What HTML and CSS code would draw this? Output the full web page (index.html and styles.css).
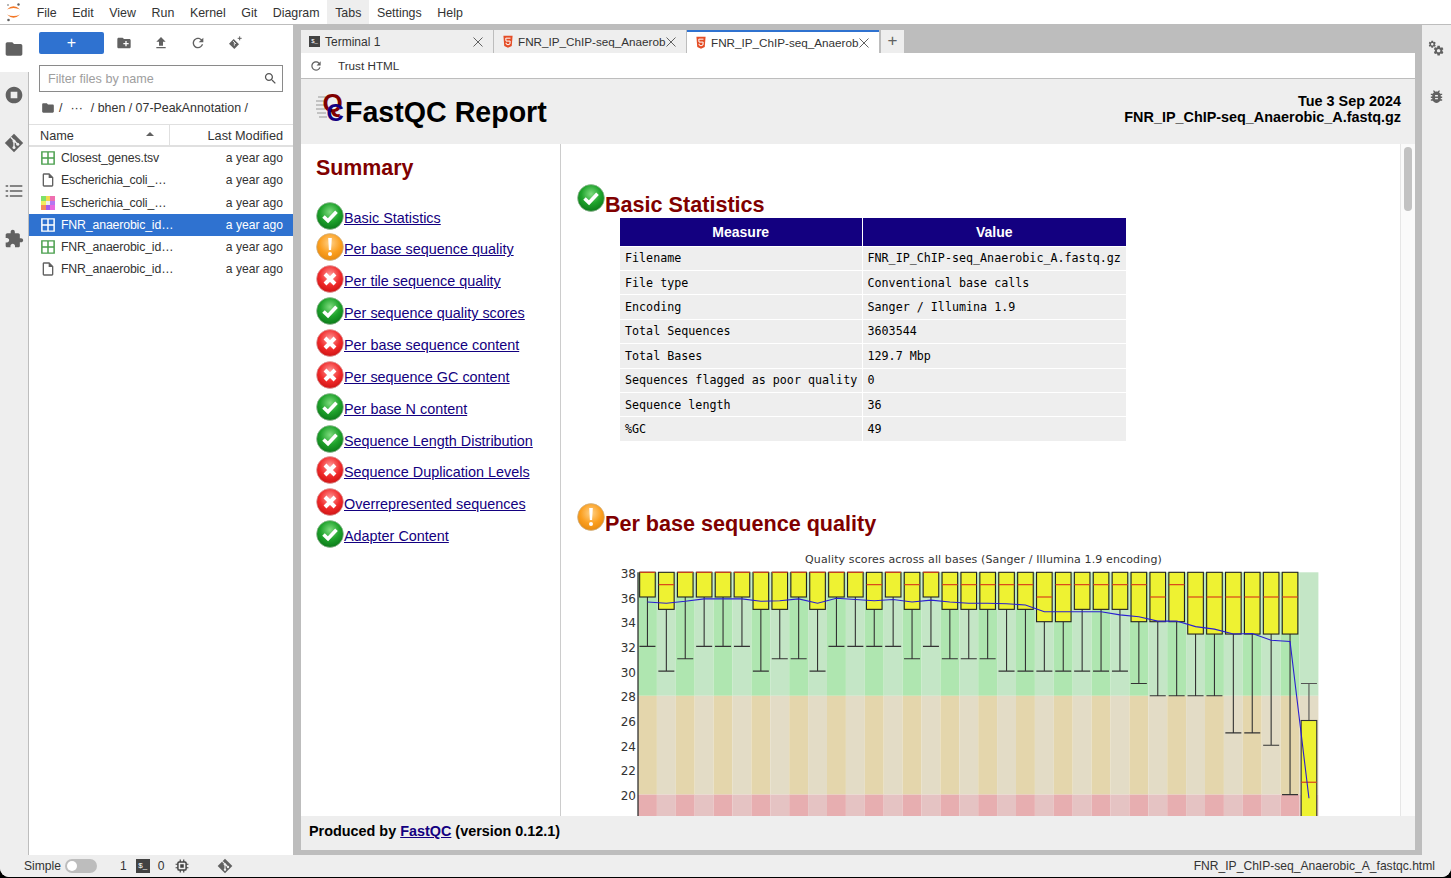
FILE: index.html
```html
<!DOCTYPE html>
<html lang="en">
<head>
    <meta charset="UTF-8">
    <title>FNR_IP_ChIP-seq_Anaerobic_A_fastqc.html - JupyterLab</title>
    <link rel="stylesheet" href="styles.css">
</head>
<body>
    <!-- Shared icons -->
    <svg class="icon-defs" aria-hidden="true">
        <defs>
            <radialGradient id="okFill" cx="50%" cy="35%" r="65%">
                <stop offset="0" stop-color="#7fdc7f"/><stop offset=".55" stop-color="#1fa32c"/><stop offset="1" stop-color="#0c7a1a"/>
            </radialGradient>
            <radialGradient id="warnFill" cx="50%" cy="35%" r="65%">
                <stop offset="0" stop-color="#ffd28a"/><stop offset=".6" stop-color="#fb9f1f"/><stop offset="1" stop-color="#e88a0f"/>
            </radialGradient>
            <radialGradient id="failFill" cx="50%" cy="35%" r="65%">
                <stop offset="0" stop-color="#ff9a9a"/><stop offset=".6" stop-color="#f02a2a"/><stop offset="1" stop-color="#cf1414"/>
            </radialGradient>
            <symbol id="status-ok" viewBox="0 0 28 28">
                <circle cx="14" cy="14" r="13.400" fill="url(#okFill)" stroke="#9cb89c" stroke-width=".7"/>
                <path d="M7.500 14.500l4.500 4.200 8.500-9" fill="none" stroke="#fff" stroke-width="3.600"/>
            </symbol>
            <symbol id="status-warn" viewBox="0 0 28 28">
                <circle cx="14" cy="14" r="13.400" fill="url(#warnFill)" stroke="#c9b28c" stroke-width=".7"/>
                <path d="M12.200 5h3.600l-.7 12h-2.200z" fill="#fff"/>
                <circle cx="14" cy="21" r="2" fill="#fff"/>
            </symbol>
            <symbol id="status-fail" viewBox="0 0 28 28">
                <circle cx="14" cy="14" r="13.400" fill="url(#failFill)" stroke="#d8a8a8" stroke-width=".7"/>
                <path d="M9 9l10 10M19 9L9 19" fill="none" stroke="#fff" stroke-width="4"/>
            </symbol>
            <symbol id="i-folder" viewBox="0 0 24 24"><path d="M10 4H4c-1.100 0-1.990.9-1.990 2L2 18c0 1.100.9 2 2 2h16c1.100 0 2-.9 2-2V8c0-1.100-.9-2-2-2h-8l-2-2z"/></symbol>
            <symbol id="i-refresh" viewBox="0 0 24 24"><path d="M17.650 6.350C16.200 4.900 14.210 4 12 4c-4.420 0-7.990 3.580-7.990 8s3.570 8 7.990 8c3.730 0 6.840-2.550 7.730-6h-2.080c-.82 2.330-3.040 4-5.650 4-3.310 0-6-2.690-6-6s2.690-6 6-6c1.660 0 3.140.69 4.220 1.780L13 11h7V4l-2.350 2.350z"/></symbol>
            <symbol id="i-git" viewBox="0 0 24 24">
                <path d="M12 1l11 11-11 11L1 12z"/>
                <path d="M8 5l8.500 8.500M12 9.500v8" fill="none" stroke="#eee" stroke-width="1.600"/>
                <circle cx="12" cy="9.500" r="1.800" fill="#eee"/><circle cx="12" cy="17.500" r="1.800" fill="#eee"/><circle cx="16.500" cy="13.500" r="1.800" fill="#eee"/>
            </symbol>
            <symbol id="i-table" viewBox="0 0 16 16">
                <path d="M1 1h14v14H1zM8 1v14M1 8h14" fill="none" stroke="currentColor" stroke-width="1.700"/>
            </symbol>
            <symbol id="i-file" viewBox="0 0 24 24"><path d="M14 2H6c-1.100 0-2 .9-2 2v16c0 1.100.9 2 2 2h12c1.100 0 2-.9 2-2V8l-6-6zM6 20V4h7v5h5v11H6z"/></symbol>
            <symbol id="i-html" viewBox="1 0 12 16">
                <path d="M1.500 1l1 12.500L7 15.500l4.500-2 1-12.500z" fill="#e44d26"/>
                <path d="M10 4H4.300l.3 3.500h5l-.3 3.500L7 12l-2.200-1-.1-1.500" fill="none" stroke="#fff" stroke-width="1.200"/>
            </symbol>
            <symbol id="i-close" viewBox="0 0 12 12"><path d="M1.500 1.500l9 9M10.500 1.500l-9 9" fill="none" stroke="#616161" stroke-width="1"/></symbol>
            <symbol id="i-gear" viewBox="0 0 24 24"><path d="M19.430 12.980c.04-.32.07-.64.07-.98s-.03-.66-.07-.98l2.110-1.650c.19-.15.24-.42.12-.64l-2-3.460c-.12-.22-.39-.3-.61-.22l-2.490 1c-.52-.4-1.080-.73-1.690-.98l-.38-2.650C14.460 2.180 14.250 2 14 2h-4c-.25 0-.46.18-.49.42l-.38 2.650c-.61.25-1.170.59-1.690.98l-2.490-1c-.23-.09-.49 0-.61.22l-2 3.460c-.13.22-.07.49.12.64l2.110 1.650c-.04.32-.07.65-.07.98s.03.66.07.98l-2.110 1.650c-.19.15-.24.42-.12.64l2 3.460c.12.22.39.3.61.22l2.490-1c.52.4 1.080.73 1.690.98l.38 2.650c.03.24.24.42.49.42h4c.25 0 .46-.18.49-.42l.38-2.650c.61-.25 1.170-.59 1.690-.98l2.490 1c.23.09.49 0 .61-.22l2-3.460c.12-.22.07-.49-.12-.64l-2.110-1.650zM12 15.500c-1.930 0-3.500-1.570-3.500-3.500s1.570-3.500 3.500-3.500 3.500 1.570 3.500 3.500-1.570 3.500-3.500 3.500z"/></symbol>
        </defs>
    </svg>

    <div class="app">
        <!-- Menu bar -->
        <header class="menubar">
            <svg class="jupyter-logo" viewBox="0 0 16 20">
                <path d="M2 7.500Q8.500 1 15 7.500 8.500 4.500 2 7.500zM2 12.500Q8.500 19 15 12.500 8.500 15.500 2 12.500z" fill="#f37726"/>
                <circle cx="13.500" cy="2.500" r="1.200" fill="#616161"/><circle cx="3" cy="3" r=".8" fill="#616161"/><circle cx="3.500" cy="18" r="1.300" fill="#616161"/>
            </svg>
            <nav class="menu">
                <span class="menu-item">File</span>
                <span class="menu-item">Edit</span>
                <span class="menu-item">View</span>
                <span class="menu-item">Run</span>
                <span class="menu-item">Kernel</span>
                <span class="menu-item">Git</span>
                <span class="menu-item">Diagram</span>
                <span class="menu-item active">Tabs</span>
                <span class="menu-item">Settings</span>
                <span class="menu-item">Help</span>
            </nav>
        </header>

        <div class="workspace">
            <!-- Left icon strip -->
            <aside class="side-tabs">
                <div class="side-tab active"><svg class="side-icon"><use href="#i-folder"/></svg></div>
                <div class="side-tab">
                    <svg class="side-icon" viewBox="0 0 24 24"><path d="M12 2C6.480 2 2 6.480 2 12s4.480 10 10 10 10-4.480 10-10S17.520 2 12 2zm4 14H8V8h8v8z"/></svg>
                </div>
                <div class="side-tab"><svg class="side-icon"><use href="#i-git"/></svg></div>
                <div class="side-tab">
                    <svg class="side-icon" viewBox="0 0 24 24"><path d="M7 5h15v2H7zM7 11h15v2H7zM7 17h15v2H7zM2 5h3v2H2zM2 11h3v2H2zM2 17h3v2H2z"/></svg>
                </div>
                <div class="side-tab">
                    <svg class="side-icon" viewBox="0 0 24 24"><path d="M20.500 11H19V7c0-1.100-.9-2-2-2h-4V3.500C13 2.120 11.880 1 10.500 1S8 2.120 8 3.500V5H4c-1.100 0-1.990.9-1.990 2v3.800H3.500c1.490 0 2.700 1.210 2.700 2.700s-1.210 2.700-2.700 2.700H2V20c0 1.100.9 2 2 2h3.800v-1.500c0-1.490 1.210-2.700 2.700-2.700 1.490 0 2.700 1.210 2.700 2.700V22H17c1.100 0 2-.9 2-2v-4h1.500c1.380 0 2.500-1.120 2.500-2.500S21.880 11 20.500 11z"/></svg>
                </div>
            </aside>

            <!-- File browser -->
            <section class="file-panel">
                <div class="file-toolbar">
                    <button class="new-btn">+</button>
                    <svg class="tool-icon" viewBox="0 0 24 24"><path d="M20 6h-8l-2-2H4c-1.110 0-1.990.89-1.990 2L2 18c0 1.110.89 2 2 2h16c1.110 0 2-.89 2-2V8c0-1.110-.89-2-2-2zm-1 8h-3v3h-2v-3h-3v-2h3V9h2v3h3v2z"/></svg>
                    <svg class="tool-icon" viewBox="0 0 24 24"><path d="M9 16h6v-6h4l-7-7-7 7h4v6zm-4 2h14v2H5z"/></svg>
                    <svg class="tool-icon"><use href="#i-refresh"/></svg>
                    <svg class="tool-icon" viewBox="0 0 24 24">
                        <path d="M10 6l8 8-7 7-8-8z"/><path d="M9 9l4.500 4.500M11 11v5" fill="none" stroke="#fff" stroke-width="1.200"/>
                        <path d="M19 2v6M16 5h6" fill="none" stroke="#616161" stroke-width="1.500"/>
                    </svg>
                </div>
                <div class="file-filter">
                    <span>Filter files by name</span>
                    <svg class="search-icon" viewBox="0 0 24 24"><path d="M15.500 14h-.79l-.28-.27C15.410 12.590 16 11.110 16 9.500 16 5.910 13.090 3 9.500 3S3 5.910 3 9.500 5.910 16 9.500 16c1.610 0 3.090-.59 4.230-1.570l.27.28v.79l5 4.990L20.490 19l-4.990-5zm-6 0C7.010 14 5 11.990 5 9.500S7.010 5 9.500 5 14 7.010 14 9.500 11.990 14 9.500 14z"/></svg>
                </div>
                <div class="crumbs">
                    <svg class="crumb-icon"><use href="#i-folder"/></svg>
                    <span>/</span><span class="crumb-dots">···</span><span>/ bhen / 07-PeakAnnotation /</span>
                </div>
                <div class="file-head">
                    <div class="col-name">Name<span class="sort-caret"></span></div>
                    <div class="col-modified">Last Modified</div>
                </div>
                <ul class="file-list">
                    <li class="file-row"><svg class="file-icon green"><use href="#i-table"/></svg><span class="file-name">Closest_genes.tsv</span><span class="file-date">a year ago</span></li>
                    <li class="file-row"><svg class="file-icon doc"><use href="#i-file"/></svg><span class="file-name">Escherichia_coli_…</span><span class="file-date">a year ago</span></li>
                    <li class="file-row">
                        <svg class="file-icon" viewBox="0 0 14 14">
                            <rect width="5" height="5" fill="#7ee06a"/><rect x="5" width="4" height="5" fill="#f3d84c"/><rect x="9" width="5" height="5" fill="#ef6fb0"/>
                            <rect y="5" width="5" height="4" fill="#f2ee5e"/><rect x="5" y="5" width="4" height="4" fill="#eee"/><rect x="9" y="5" width="5" height="4" fill="#b478f0"/>
                            <rect y="9" width="5" height="5" fill="#f58a5a"/><rect x="5" y="9" width="4" height="5" fill="#a45cf0"/><rect x="9" y="9" width="5" height="5" fill="#e86ae0"/>
                        </svg>
                        <span class="file-name">Escherichia_coli_…</span><span class="file-date">a year ago</span>
                    </li>
                    <li class="file-row selected"><svg class="file-icon"><use href="#i-table"/></svg><span class="file-name">FNR_anaerobic_id…</span><span class="file-date">a year ago</span></li>
                    <li class="file-row"><svg class="file-icon green"><use href="#i-table"/></svg><span class="file-name">FNR_anaerobic_id…</span><span class="file-date">a year ago</span></li>
                    <li class="file-row"><svg class="file-icon doc"><use href="#i-file"/></svg><span class="file-name">FNR_anaerobic_id…</span><span class="file-date">a year ago</span></li>
                </ul>
            </section>

            <!-- Main document area -->
            <main class="dock">
                <div class="tabbar">
                    <div class="tab">
                        <span class="term-icon">$_</span><span class="tab-label term-label">Terminal 1</span>
                        <svg class="tab-close"><use href="#i-close"/></svg>
                    </div>
                    <div class="tab">
                        <svg class="html-icon"><use href="#i-html"/></svg><span class="tab-label">FNR_IP_ChIP-seq_Anaerob</span>
                        <svg class="tab-close"><use href="#i-close"/></svg>
                    </div>
                    <div class="tab current">
                        <svg class="html-icon"><use href="#i-html"/></svg><span class="tab-label">FNR_IP_ChIP-seq_Anaerob</span>
                        <svg class="tab-close"><use href="#i-close"/></svg>
                    </div>
                    <div class="tab-add">+</div>
                </div>
                <div class="doc-toolbar">
                    <svg class="doc-refresh"><use href="#i-refresh"/></svg>
                    <span>Trust HTML</span>
                </div>

                <div class="report">
                    <div class="report-head">
                        <div class="report-title">
                            <svg class="fastqc-logo" viewBox="0 0 30 32">
                                <path d="M2 4h8M0 8h8M0 12h8M0 16h9M1 20h9M3 24h8" stroke="#b5b5b5" stroke-width="1.500"/>
                                <text x="6.500" y="19" class="logo-q">Q</text>
                                <text x="10.500" y="28" class="logo-c">C</text>
                            </svg>
                            <h1>FastQC Report</h1>
                        </div>
                        <div class="report-meta">
                            <div>Tue 3 Sep 2024</div>
                            <div>FNR_IP_ChIP-seq_Anaerobic_A.fastq.gz</div>
                        </div>
                    </div>

                    <div class="report-body">
                        <nav class="summary">
                            <h2>Summary</h2>
                            <ul>
                                <li><svg class="status"><use href="#status-ok"/></svg><a href="#">Basic Statistics</a></li>
                                <li><svg class="status"><use href="#status-warn"/></svg><a href="#">Per base sequence quality</a></li>
                                <li><svg class="status"><use href="#status-fail"/></svg><a href="#">Per tile sequence quality</a></li>
                                <li><svg class="status"><use href="#status-ok"/></svg><a href="#">Per sequence quality scores</a></li>
                                <li><svg class="status"><use href="#status-fail"/></svg><a href="#">Per base sequence content</a></li>
                                <li><svg class="status"><use href="#status-fail"/></svg><a href="#">Per sequence GC content</a></li>
                                <li><svg class="status"><use href="#status-ok"/></svg><a href="#">Per base N content</a></li>
                                <li><svg class="status"><use href="#status-ok"/></svg><a href="#">Sequence Length Distribution</a></li>
                                <li><svg class="status"><use href="#status-fail"/></svg><a href="#">Sequence Duplication Levels</a></li>
                                <li><svg class="status"><use href="#status-fail"/></svg><a href="#">Overrepresented sequences</a></li>
                                <li><svg class="status"><use href="#status-ok"/></svg><a href="#">Adapter Content</a></li>
                            </ul>
                        </nav>

                        <div class="modules">
                            <h2 class="module-title"><svg class="status"><use href="#status-ok"/></svg>Basic Statistics</h2>
                            <table class="stats">
                                <thead>
                                    <tr><th>Measure</th><th>Value</th></tr>
                                </thead>
                                <tbody>
                                    <tr><td>Filename</td><td>FNR_IP_ChIP-seq_Anaerobic_A.fastq.gz</td></tr>
                                    <tr><td>File type</td><td>Conventional base calls</td></tr>
                                    <tr><td>Encoding</td><td>Sanger / Illumina 1.9</td></tr>
                                    <tr><td>Total Sequences</td><td>3603544</td></tr>
                                    <tr><td>Total Bases</td><td>129.7 Mbp</td></tr>
                                    <tr><td>Sequences flagged as poor quality</td><td>0</td></tr>
                                    <tr><td>Sequence length</td><td>36</td></tr>
                                    <tr><td>%GC</td><td>49</td></tr>
                                </tbody>
                            </table>

                            <h2 class="module-title second"><svg class="status"><use href="#status-warn"/></svg>Per base sequence quality</h2>
                            <div id="qualityChart" class="chart"></div>
                        </div>

                        <div class="scrollbar"><div class="scroll-thumb"></div></div>
                    </div>

                    <div class="report-foot">Produced by <a href="#">FastQC</a> (version 0.12.1)</div>
                </div>
            </main>

            <!-- Right icon strip -->
            <aside class="right-tabs">
                <svg class="gears" viewBox="0 0 16 16">
                    <use href="#i-gear" x="0" y="0" width="8" height="8"/>
                    <use href="#i-gear" x="4.500" y="4.500" width="11" height="11"/>
                </svg>
                <svg class="bug" viewBox="0 0 24 24"><path d="M20 8h-2.810c-.45-.78-1.070-1.450-1.820-1.960L17 4.410 15.590 3l-2.170 2.170C12.960 5.060 12.490 5 12 5c-.49 0-.96.06-1.410.17L8.410 3 7 4.410l1.620 1.630C7.880 6.550 7.260 7.220 6.810 8H4v2h2.090c-.05.33-.09.66-.09 1v1H4v2h2v1c0 .34.04.67.09 1H4v2h2.810c1.040 1.790 2.970 3 5.190 3s4.150-1.210 5.190-3H20v-2h-2.090c.05-.33.09-.66.09-1v-1h2v-2h-2v-1c0-.34-.04-.67-.09-1H20V8zm-6 8h-4v-2h4v2zm0-4h-4v-2h4v2z"/></svg>
            </aside>
        </div>

        <!-- Status bar -->
        <footer class="statusbar">
            <span class="simple-label">Simple</span>
            <span class="toggle"><span class="toggle-knob"></span></span>
            <span class="stat-count">1</span>
            <span class="term-icon status-term">$_</span>
            <span class="stat-zero">0</span>
            <svg class="cpu-icon" viewBox="0 0 24 24">
                <path d="M7 5h10a2 2 0 0 1 2 2v10a2 2 0 0 1-2 2H7a2 2 0 0 1-2-2V7a2 2 0 0 1 2-2z" fill="none" stroke="#424242" stroke-width="2.500"/>
                <rect x="9" y="9" width="6" height="6" fill="#424242"/>
                <path d="M9 1v4M15 1v4M9 19v4M15 19v4M1 9h4M1 15h4M19 9h4M19 15h4" stroke="#424242" stroke-width="2"/>
            </svg>
            <svg class="status-git"><use href="#i-git"/></svg>
            <span class="status-file">FNR_IP_ChIP-seq_Anaerobic_A_fastqc.html</span>
        </footer>
    </div>

    <script src="chart.js"></script>
</body>
</html>
```

FILE: styles.css
```css
* {
    box-sizing: border-box;
}

html {
    background: #000;
}

body {
    margin: 0;
    height: 878px;
    overflow: hidden;
    font-family: "Liberation Sans", Arial, sans-serif;
    font-size: 12.3px;
    color: #333;
}

ul {
    list-style: none;
    margin: 0;
    padding: 0;
}

.icon-defs {
    position: absolute;
    width: 0;
    height: 0;
}

.app {
    height: 877px;
    display: flex;
    flex-direction: column;
    overflow: hidden;
    background: #eee;
    border-radius: 0 0 9px 9px;
}

/* Menu bar */
.menubar {
    height: 25px;
    flex: none;
    display: flex;
    align-items: center;
    background: #fff;
    border-bottom: 1px solid #bdbdbd;
}

.jupyter-logo {
    width: 16px;
    height: 20px;
    margin-left: 5px;
}

.menu {
    display: flex;
    margin-left: 8px;
}

.menu-item {
    padding: 2px 7.8px 0;
    font-size: 12.4px;
    line-height: 22px;
}

.menu-item.active {
    background: #eee;
}

.workspace {
    flex: 1;
    min-height: 0;
    display: flex;
}

/* Left icon strip */
.side-tabs {
    width: 29px;
    flex: none;
    border-right: 1px solid #bdbdbd;
}

.side-tab {
    height: 48px;
    display: flex;
    align-items: center;
    justify-content: center;
    padding-right: 1px;
    fill: #616161;
}

.side-tab.active {
    height: 47px;
    background: #fff;
    margin-right: -1px;
    margin-bottom: -1px;
    padding-right: 2px;
}

.side-icon {
    width: 20px;
    height: 20px;
}

/* File browser */
.file-panel {
    width: 264px;
    flex: none;
    background: #fff;
    display: flex;
    flex-direction: column;
}

.file-toolbar {
    display: flex;
    align-items: center;
    gap: 21px;
    padding: 7px 0 0 10px;
    fill: #616161;
}

.new-btn {
    width: 65px;
    height: 22px;
    border: none;
    border-radius: 2px;
    background: #2f72d0;
    color: #fff;
    font-size: 16px;
    font-family: inherit;
    padding: 0;
    margin-right: -9px;
}

.tool-icon {
    width: 16px;
    height: 16px;
}

.file-filter {
    display: flex;
    align-items: center;
    justify-content: space-between;
    height: 27px;
    margin: 11px 10px 0;
    padding: 0 4px 0 8px;
    border: 1px solid #8a8a8a;
    font-size: 12.6px;
    color: #9e9e9e;
}

.search-icon {
    width: 15px;
    height: 15px;
    fill: #555;
}

.crumbs {
    display: flex;
    align-items: center;
    height: 32px;
    padding-left: 12px;
    font-size: 12.4px;
}

.crumb-icon {
    width: 14px;
    height: 14px;
    fill: #616161;
    margin-right: 4px;
}

.crumb-dots {
    margin: 0 8px;
}

.file-head {
    display: flex;
    height: 23px;
    border-top: 1px solid #e0e0e0;
    border-bottom: 2px solid #e0e0e0;
    font-size: 12.7px;
    line-height: 22px;
}

.col-name {
    position: relative;
    width: 141px;
    padding-left: 11px;
    border-right: 1px solid #e0e0e0;
}

.sort-caret {
    position: absolute;
    right: 15px;
    top: 7px;
    border: 4px solid transparent;
    border-top: none;
    border-bottom: 4px solid #616161;
}

.col-modified {
    flex: 1;
    text-align: right;
    padding-right: 10px;
}

.file-row {
    height: 22.25px;
    display: flex;
    align-items: center;
    padding: 0 10px 0 12px;
}

.file-row.selected {
    background: #2f72d0;
    color: #fff;
}

.file-icon {
    width: 14px;
    height: 14px;
    flex: none;
    color: #fff;
}

.file-icon.green {
    color: #4a9f4d;
}

.file-icon.doc {
    width: 16px;
    height: 16px;
    margin-left: -1px;
    margin-right: -1px;
    fill: #616161;
}

.file-name {
    margin-left: 6px;
    flex: 1;
    white-space: nowrap;
    letter-spacing: -.15px;
}

.file-date {
    font-size: 12.1px;
}

/* Dock */
.dock {
    width: 1129px;
    flex: none;
    display: flex;
    flex-direction: column;
    background: #bdbdbd;
    padding: 0 7px 5px 8px;
}

.tabbar {
    height: 28px;
    flex: none;
    display: flex;
    align-items: flex-end;
    gap: 1px;
}

.tab {
    width: 192px;
    height: 23px;
    display: flex;
    align-items: center;
    background: #eee;
    padding: 0 9px 0 8px;
    font-size: 11.7px;
}

.tab.current {
    background: #fff;
    border-top: 2px solid #2f72d0;
}

.tab-label {
    flex: 1;
    white-space: nowrap;
    margin-left: 5px;
}

.term-label {
    font-size: 12px;
}

.tab-close {
    width: 12px;
    height: 12px;
    flex: none;
}

.html-icon {
    width: 10px;
    height: 15px;
    flex: none;
    margin-left: 1px;
}

.term-icon {
    width: 11px;
    height: 11px;
    flex: none;
    background: #424242;
    color: #fff;
    font-size: 6px;
    line-height: 11px;
    text-align: center;
}

.tab-add {
    width: 23px;
    height: 23px;
    margin-left: 1px;
    background: #eee;
    color: #616161;
    font-size: 17px;
    line-height: 22px;
    text-align: center;
}

.doc-toolbar {
    height: 26px;
    flex: none;
    display: flex;
    align-items: center;
    gap: 15px;
    padding-left: 8px;
    background: #fff;
    border-bottom: 1px solid #bdbdbd;
    font-size: 11.7px;
}

.doc-refresh {
    width: 14px;
    height: 14px;
    fill: #616161;
}

/* FastQC report */
.report {
    flex: 1;
    min-height: 0;
    display: flex;
    flex-direction: column;
    background: #fff;
    color: #000;
}

.report a {
    color: #130080;
}

.report-head {
    height: 65px;
    flex: none;
    display: flex;
    justify-content: space-between;
    background: #eee;
    padding: 0 14px 0 15px;
}

.report-title {
    display: flex;
    align-items: flex-start;
}

.fastqc-logo {
    width: 30px;
    height: 32px;
    margin-top: 14px;
    margin-right: -1px;
    overflow: visible;
}

.logo-q {
    font: bold 26px "Liberation Sans", Arial, sans-serif;
    fill: #800000;
}

.logo-c {
    font: bold 24px "Liberation Sans", Arial, sans-serif;
    fill: #130080;
}

.report-title h1 {
    margin: 16px 0 0;
    font-size: 28.6px;
    line-height: 34px;
}

.report-meta {
    padding-top: 14px;
    text-align: right;
    font-weight: bold;
    font-size: 14.4px;
    line-height: 16px;
}

.report-body {
    flex: 1;
    min-height: 0;
    display: flex;
    overflow: hidden;
}

.summary {
    width: 260px;
    flex: none;
    padding: 11px 0 0 15px;
    border-right: 1px solid #ccc;
}

.summary h2 {
    margin: 0 0 18.7px;
    color: #800000;
    font-size: 21.4px;
    line-height: 26px;
}

.summary li {
    height: 31.85px;
    display: flex;
    align-items: center;
    font-size: 14.4px;
}

.status {
    width: 28px;
    height: 28px;
    flex: none;
}

.summary a {
    position: relative;
    top: 2px;
}

.modules {
    flex: 1;
    min-width: 0;
    padding: 40px 0 0 16px;
    overflow: hidden;
}

.module-title {
    display: flex;
    align-items: flex-start;
    margin: 0;
    height: 34px;
    color: #800000;
    font-size: 21.6px;
    line-height: 42px;
}

.module-title.second {
    margin-top: 62px;
}

.stats {
    width: 507px;
    margin-left: 43px;
    border-collapse: collapse;
    table-layout: fixed;
}

.stats th {
    height: 28px;
    background: #130080;
    color: #fff;
    font-size: 14px;
    border-right: 1px solid #fff;
    padding: 0;
}

.stats th:first-child,
.stats td:first-child {
    width: 242px;
}

.stats td {
    height: 24.43px;
    padding: 0 5px;
    background: #eee;
    border: 1px solid #fff;
    border-left: none;
    font-family: "DejaVu Sans Mono", "Liberation Mono", monospace;
    font-size: 11.7px;
    white-space: nowrap;
}

.stats tr:last-child td {
    border-bottom: none;
}

.chart {
    margin: 8px 0 0 28px;
}

.chart svg {
    display: block;
}

.chart text {
    font-family: "DejaVu Sans", sans-serif;
    fill: #333;
}

.scrollbar {
    width: 15px;
    flex: none;
    background: #fafafa;
    border-left: 1px solid #e6e6e6;
    padding: 3px 3px 0 3px;
}

.scroll-thumb {
    height: 64px;
    border-radius: 4px;
    background: #c2c2c2;
}

.report-foot {
    height: 34px;
    flex: none;
    padding-left: 8px;
    background: #eee;
    font-weight: bold;
    font-size: 14.4px;
    line-height: 31px;
}

/* Right icon strip */
.right-tabs {
    flex: 1;
    display: flex;
    flex-direction: column;
    align-items: center;
    gap: 31px;
    padding-top: 15px;
    fill: #616161;
}

.gears {
    width: 17px;
    height: 17px;
}

.bug {
    width: 17px;
    height: 17px;
}

/* Status bar */
.statusbar {
    height: 22px;
    flex: none;
    display: flex;
    align-items: center;
    padding-left: 24px;
    background: #eee;
    font-size: 12.1px;
}

.toggle {
    position: relative;
    width: 32px;
    height: 14px;
    margin-left: 4px;
    border-radius: 7px;
    background: #bdbdbd;
}

.toggle-knob {
    position: absolute;
    left: 2px;
    top: 2px;
    width: 10px;
    height: 10px;
    border-radius: 50%;
    background: #fff;
}

.stat-count {
    margin-left: 23px;
}

.status-term {
    width: 14px;
    height: 14px;
    margin-left: 9px;
    line-height: 14px;
    font-size: 8px;
}

.stat-zero {
    margin-left: 8px;
}

.cpu-icon {
    width: 14px;
    height: 14px;
    margin-left: 11px;
}

.status-git {
    width: 16px;
    height: 16px;
    margin-left: 28px;
    fill: #616161;
}

.status-file {
    margin-left: auto;
    padding-right: 16px;
}
```

FILE: chart.js
```js
// Per base quality plot, one entry per base: [box bottom, median, lower whisker]
const boxes = [
    [36, 38, 32], [35, 37, 30], [36, 38, 31], [36, 38, 32], [36, 38, 32], [36, 38, 32],
    [35, 38, 30], [35, 38, 31], [36, 38, 31], [35, 38, 30], [36, 38, 32], [36, 38, 32],
    [35, 37, 32], [36, 38, 32], [35, 37, 31], [36, 38, 32], [35, 37, 31], [35, 37, 31],
    [35, 37, 31], [35, 37, 30], [35, 37, 30], [34, 36, 30], [34, 37, 30], [35, 37, 30],
    [35, 37, 30], [35, 37, 30], [34, 37, 29], [34, 36, 28], [34, 37, 28], [33, 36, 28],
    [33, 36, 28], [33, 36, 25], [33, 36, 25], [33, 36, 24], [33, 36, 20]
];

const means = [
    35.6, 35.5, 35.65, 35.85, 35.85, 35.85, 35.65, 35.7, 35.85, 35.5, 35.9, 35.8,
    35.7, 35.8, 35.6, 35.75, 35.6, 35.5, 35.5, 35.45, 35.35, 34.8, 34.8, 34.8,
    34.8, 34.55, 34.4, 34.05, 34.05, 33.6, 33.4, 33, 33.05, 32.5, 32.4, 19.7
];

const left = 33;
const top0 = 27.3;
const bandW = 18.9;
const unit = 12.35;
const y = v => top0 + (38 - v) * unit;
const cx = i => left + bandW * (i + 0.5);

let out = '';

// Background bands
for (let i = 0; i < 36; i++) {
    const odd = i % 2 === 0;
    const x = left + i * bandW;
    out += `<rect x="${x}" y="${y(38)}" width="${bandW}" height="${10 * unit}" fill="${odd ? '#afe6b0' : '#c4e6c6'}"/>`;
    out += `<rect x="${x}" y="${y(28)}" width="${bandW}" height="${8 * unit}" fill="${odd ? '#e4d6ac' : '#e3dcc6'}"/>`;
    out += `<rect x="${x}" y="${y(20)}" width="${bandW}" height="${4 * unit}" fill="${odd ? '#e7aeb0' : '#e5c3c3'}"/>`;
}

// Axis
for (let v = 38; v >= 18; v -= 2) {
    out += `<text x="31" y="${y(v) + 5.5}" text-anchor="end" font-size="12">${v}</text>`;
}
out += `<path d="M${left} ${y(38)}V400" stroke="#222" stroke-width="1.2"/>`;

// Boxes
boxes.forEach((b, i) => {
    const x = cx(i);
    out += `<path d="M${x} ${y(b[0])}V${y(b[2])}M${x - 8} ${y(b[2])}h16" fill="none" stroke="#333" stroke-width="1.1"/>`;
    out += `<rect x="${x - 7.8}" y="${y(38)}" width="15.6" height="${(38 - b[0]) * unit}" fill="#eef232" stroke="#222" stroke-width="1.1"/>`;
    out += `<path d="M${x - 7.8} ${y(b[1])}h15.6" stroke="#d8431a" stroke-width="1.2"/>`;
});

// Last base has its box below the whisker
const lastX = cx(35);
out += `<path d="M${lastX} ${y(29)}V${y(26)}M${lastX - 8} ${y(29)}h16" fill="none" stroke="#555" stroke-width="1.1"/>`;
out += `<rect x="${lastX - 7.8}" y="${y(26)}" width="15.6" height="120" fill="#eef232" stroke="#333" stroke-width="1.1"/>`;
out += `<path d="M${lastX - 7.8} ${y(21)}h15.6" stroke="#d8431a" stroke-width="1.2"/>`;

// Mean line
const pts = means.map((m, i) => `${cx(i)},${y(m)}`).join(' ');
out += `<polyline points="${pts}" fill="none" stroke="#2a1fd0" stroke-width="1.1"/>`;

out += `<text x="378.5" y="18" text-anchor="middle" font-size="11" letter-spacing=".12">Quality scores across all bases (Sanger / Illumina 1.9 encoding)</text>`;

document.getElementById('qualityChart').innerHTML =
    `<svg width="730" height="400" viewBox="0 0 730 400">${out}</svg>`;
```
